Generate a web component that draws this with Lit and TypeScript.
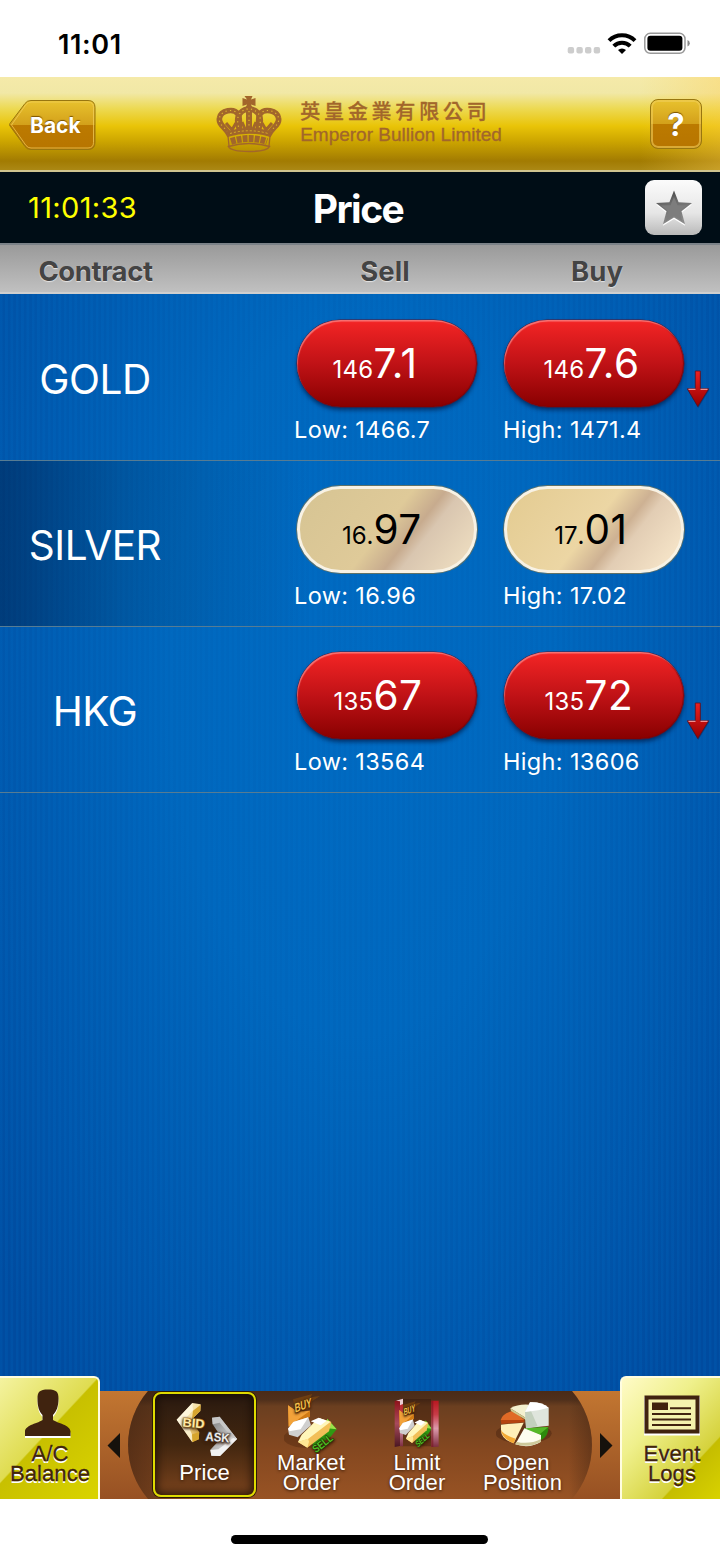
import { LitElement, html, css, svg } from "lit";
import { customElement, property } from "lit/decorators.js";
import { classMap } from "lit/directives/class-map.js";

interface Quote {
  name: string;
  sell: [string, string];
  buy: [string, string];
  low: string;
  high: string;
  down: boolean;
}

const quotes: Quote[] = [
  { name: "GOLD", sell: ["146", "7.1"], buy: ["146", "7.6"], low: "1466.7", high: "1471.4", down: true },
  { name: "SILVER", sell: ["16.", "97"], buy: ["17.", "01"], low: "16.96", high: "17.02", down: false },
  { name: "HKG", sell: ["135", "67"], buy: ["135", "72"], low: "13564", high: "13606", down: true },
];

const statusIcons = html`
  <svg width="124" height="24" viewBox="0 0 124 24">
    <g fill="#cdcdcd">
      <rect x="0.7" y="15" width="6.4" height="6.4" rx="2" />
      <rect x="9.4" y="15" width="6.4" height="6.4" rx="2" />
      <rect x="18" y="15" width="6.4" height="6.4" rx="2" />
      <rect x="26.7" y="15" width="6.4" height="6.4" rx="2" />
    </g>
    <g fill="none" stroke="#000" stroke-width="4">
      <path d="M42 8.600a18.400 18.400 0 0 1 26 0" />
      <path d="M46.800 14.200a11.400 11.400 0 0 1 16.400 0" />
    </g>
    <path d="M51 18a6 6 0 0 1 8 0l-4 4z" fill="#000" />
    <rect x="77.8" y="1.3" width="40.2" height="20" rx="5.5" fill="none" stroke="#999" stroke-width="1.5" />
    <rect x="80.4" y="3.8" width="35" height="15" rx="3" />
    <path d="M120.500 8q2.300 1 2.300 3.300t-2.300 3.300z" fill="#888" />
  </svg>
`;

const crown = html`
  <svg width="66" height="58" viewBox="0 0 66 58" fill="none" stroke="#a2662b">
    <path
      d="M28.500 1h8l-1.500 3.500 4.500-1.500v8l-4.500-1.500 1.500 3.500h-7l1.500-3.500-4.500 1.500v-8l4.500 1.500z"
      fill="#a2662b"
      stroke="none"
    />
    <g stroke-width="5.600">
      <path d="M14 41C10 32 2 30 3.500 23C5 15 18 13 22 19C25 24 22 28 24 36" />
      <path d="M52 41C56 32 64 30 62.500 23C61 15 48 13 44 19C41 24 44 28 42 36" />
      <path d="M24 36C20 26 20 16 33 13.500C46 16 46 26 42 36" />
      <path d="M33 14v22" stroke-width="6" />
    </g>
    <g stroke="#e0bb2c" stroke-width="1.200" stroke-dasharray="1.200 3.200">
      <path d="M14 41C10 32 2 30 3.500 23C5 15 18 13 22 19" />
      <path d="M52 41C56 32 64 30 62.500 23C61 15 48 13 44 19" />
      <path d="M24 36C20 26 20 16 33 13.500C46 16 46 26 42 36" />
      <path d="M33 16v20" />
    </g>
    <path d="M10 28l6 7 4-7M56 28l-6 7-4-7M26 27l3 7M40 27l-3 7" stroke-width="3" />
    <path d="M11 37Q33 30 55 37L54 41Q33 35 12 41z" fill="#a2662b" stroke-width="1.400" />
    <path d="M14 38.500Q33 33 52 38.500" stroke="#d8b024" stroke-width="1" stroke-dasharray="2 2" />
    <path d="M15 46.500Q33 40.500 51 46.500" stroke-width="6.800" stroke-dasharray="4.800 1.200" />
    <path d="M12.500 51.500Q33 45.500 53.500 51.500Q51 56.500 33 56.500Q15 56.500 12.500 51.500z" stroke-width="1.600" />
    <path d="M12 41l1 10M54 41l-1 10" stroke-width="1.300" />
  </svg>
`;

const downArrow = html`
  <svg class="arrow" width="24" height="40" viewBox="0 0 24 40">
    <defs>
      <linearGradient id="ar" x1="0" y1="0" x2="0" y2="1">
        <stop offset="0" stop-color="#ee2020" />
        <stop offset="1" stop-color="#950000" />
      </linearGradient>
    </defs>
    <path d="M8.800 2.500h5v17.500h8.500l-11 18L.5 20h8.300z" fill="#002a66" opacity=".5" />
    <path d="M8.300 1h5v17.800h8.400L10.800 36.500 .3 18.800h8z" fill="url(#ar)" stroke="#5c1020" stroke-width=".8" />
    <path d="M1.500 19.400h7M13.500 19.400h7" stroke="#ef8f8f" stroke-width="1.300" />
  </svg>
`;

const starIcon = html`
  <svg width="38" height="36" viewBox="0 0 38 36">
    <defs>
      <linearGradient id="sg" x1="0" y1="0" x2=".3" y2="1">
        <stop offset="0" stop-color="#3a3a3a" />
        <stop offset=".45" stop-color="#6c6c6c" />
        <stop offset="1" stop-color="#8a8a8a" />
      </linearGradient>
    </defs>
    <path d="M19 2l4.600 11.800 13.400.8-10.500 8.100 3.500 13L19 29 8 35.700l3.500-13L1 14.600l13.400-.8z" fill="#fff" />
    <path d="M19 .5l4.600 11.800 13.400.8-10.500 8.100 3.500 13L19 27.500 8 34.200l3.500-13L1 13.100l13.400-.8z" fill="url(#sg)" />
    <path d="M19 7l3.500 8.200 9.500.3-7.500 6 2.700 9.500-8.200-5.300-8.200 5.300 2.700-9.500-7.500-6 9.500-.3z" fill="#7d7d7d" />
  </svg>
`;

const personIcon = html`
  <svg width="48" height="50" viewBox="0 0 48 50">
    <path
      d="M24 2.500c8.500 0 10.500 4 10.500 9 0 8-2 13-5.500 16.500v5c4 3 17.500 5 17.500 11.500V49H1V44.500C1 38 15 36 18.500 33v-5C15 24.500 13.500 19.500 13.500 11.500c0-5 2-9 10.500-9z"
      fill="#fff"
    />
    <path
      d="M24 .5c8.500 0 10.500 2.500 10.500 9 0 8-2 13-5.500 16.500v5c4 3 17.500 5 17.500 11.500V47H1V42.500C1 36 15 34 18.500 31v-5C15 22.500 13.500 17.500 13.500 9.500c0-6.500 2-9 10.500-9z"
      fill="#40230f"
    />
  </svg>
`;

const logIcon = html`
  <svg width="56" height="42" viewBox="0 0 56 42">
    <rect x="2" y="3.500" width="52" height="35" fill="none" stroke="#fff" stroke-width="4" />
    <rect x="2.500" y="2.500" width="51" height="34" fill="#f4f2ad" stroke="#40230f" stroke-width="4" />
    <rect x="8" y="7.500" width="16" height="7.500" fill="#40230f" />
    <path d="M26 13.300h21M8 19h39M8 24.500h39M8 30h39" stroke="#40230f" stroke-width="2" />
  </svg>
`;

const priceIcon = html`
  <svg class="art" width="66" height="58" viewBox="520 105 198 174">
    <defs>
      <linearGradient id="g1" x1="0" y1="0" x2="1" y2="1">
        <stop offset="0" stop-color="#fffdf0" />
        <stop offset=".5" stop-color="#f5dfa0" />
        <stop offset="1" stop-color="#c98d18" />
      </linearGradient>
      <linearGradient id="g2" x1="0" y1="0" x2="1" y2="1">
        <stop offset="0" stop-color="#777" />
        <stop offset=".5" stop-color="#bbb" />
        <stop offset="1" stop-color="#fff" />
      </linearGradient>
    </defs>
    <path d="M531 164L578 114l25 4-1 20-27 26 24 38-2 21-19 9z" fill="url(#g1)" />
    <path d="M580 137l23-18-1 19-25 24zM578 231l-3-22 22-7 1 21z" fill="#d7a52e" />
    <path d="M531 164l47-50 2 22-24 26 21 46 1 24z" fill="#fffbe6" opacity=".75" />
    <path d="M712 222L660 155l-23 3 2 20 27 40-34 36 3 18 26 1z" fill="url(#g2)" />
    <path d="M661 273l51-51-6-7-50 38-24 2 3 17z" fill="#f2f2f2" />
    <path d="M660 155l52 67-14-4-38-45-21 5-2-20z" fill="#c7c7c7" />
    <text x="549" y="187" font-size="37" textLength="66" lengthAdjust="spacingAndGlyphs" fill="#ffe9a6" stroke="#b98a30" stroke-width="4" transform="rotate(5 580 172)">BID</text>
    <text x="618" y="229" font-size="37" textLength="72" lengthAdjust="spacingAndGlyphs" fill="#ededed" stroke="#666" stroke-width="4" transform="rotate(5 650 215)">ASK</text>
  </svg>
`;

// gold bars between the BUY and SELL arrows, used by both order tabs
const bars = svg`
  <path d="M122 122l28 19 38-3v18l-20 14-44 16z" fill="#d07a14" />
  <path d="M122 122l28 19 38-3-30 22-34 26z" fill="#f2a23a" />
  <path d="M137 104l58-16-5 10 28-4-24 16-4 20-44 16z" fill="#8a4e0c" opacity=".55" />
  <text x="0" y="0" font-size="37" textLength="54" lengthAdjust="spacingAndGlyphs" fill="#f5c04c" stroke="#5b3406" stroke-width="3" transform="translate(143 144) rotate(-20) skewX(-16)">BUY</text>
  <path d="M122 192l16-20 45-14 8 24-40 36-26-8z" fill="#cfcfcf" />
  <path d="M122 192l16-20 45-14-23 36-34 6z" fill="#fff" />
  <path d="M240 162l28 32-18 22-52 34-4-20 34-36z" fill="#2f9a12" />
  <path d="M240 162l28 32-34-4z" fill="#9be04a" />
  <path d="M152 232l62-72 38 12-7 28-65 49z" fill="#f2bf58" />
  <path d="M152 232l11-22 51-50 36 11-68 52z" fill="#fff6ba" />
  <path d="M190 170l24-11 24 9-18 14z" fill="#fff" />
  <path d="M152 232l30-10 3 9-5 18z" fill="#ffe794" />
  <text x="206" y="266" font-size="33" textLength="68" lengthAdjust="spacingAndGlyphs" fill="#4fbd22" stroke="#0f4a08" stroke-width="3" transform="rotate(-38 206 266)">SELL</text>
`;

const marketIcon = html`
  <svg class="art" width="58" height="62" viewBox="110 85 174 186">
    <ellipse cx="180" cy="220" rx="72" ry="30" fill="#3a1c08" opacity=".3" />
    ${bars}
  </svg>
`;

const limitIcon = html`
  <svg class="art" width="48" height="52" viewBox="429 98 144 156">
    <defs>
      <linearGradient id="rb" x1="0" y1="0" x2="0" y2="1">
        <stop offset="0" stop-color="#b81820" />
        <stop offset=".3" stop-color="#c83c48" />
        <stop offset=".6" stop-color="#dd9aac" />
        <stop offset="1" stop-color="#7c2c40" />
      </linearGradient>
      <linearGradient id="rd" x1="0" y1="0" x2="0" y2="1">
        <stop offset="0" stop-color="#8e1018" />
        <stop offset=".5" stop-color="#a84a5c" />
        <stop offset="1" stop-color="#4a1622" />
      </linearGradient>
    </defs>
    <path d="M457 104h86v142h-86z" fill="#2a1206" opacity=".35" />
    <path d="M434 110l16-3v138l-16 3z" fill="url(#rd)" />
    <path d="M450 107l9-3v142h-9z" fill="url(#rb)" />
    <path d="M438 109l21-6v16l-9 4v-12z" fill="#e9cdd3" />
    <g transform="translate(366 42) scale(.67 .78)">${bars}</g>
    <path d="M544 109h22v138l-22 1z" fill="url(#rb)" />
    <path d="M544 109h6v139h-6z" fill="#7a1420" opacity=".6" />
  </svg>
`;

const positionIcon = html`
  <svg width="58" height="50" viewBox="105 102 174 150">
    <ellipse cx="188" cy="205" rx="84" ry="30" fill="#2a1206" opacity=".3" />
    <path d="M119 165Q123 145 158 137L190 165z" fill="#e06a26" />
    <path d="M119 165L190 165 190 172 121 177z" fill="#b5430f" />
    <path d="M148 130Q170 117 203 119L196 160z" fill="#f4f1cf" />
    <path d="M148 130l48 30v6l-46-28z" fill="#cfc98d" />
    <path d="M120 179l68-6-30 62Q120 222 120 195z" fill="#ffefb8" />
    <path d="M120 195Q122 220 158 235l6-14Q128 210 120 195z" fill="#f4a935" />
    <path d="M188 190l74-4Q264 212 240 226z" fill="#2d8a0c" />
    <path d="M188 190l74-4-26 22z" fill="#55b828" />
    <path d="M190 190l50 20v20Q205 252 163 238z" fill="#fdfdf0" />
    <path d="M163 238q40 12 77-8v-8q-36 18-74 8z" fill="#cdc99a" />
    <path d="M207 112Q240 110 263 128V182L195 190 192 140z" fill="#dfe5dc" />
    <path d="M192 140l18-2 20 46-35 6z" fill="#c3d0bd" />
    <path d="M207 112Q240 110 263 128L232 136 192 141z" fill="#fff" />
  </svg>
`;

@customElement("price-pill")
class PricePill extends LitElement {
  @property() small = "";
  @property() large = "";
  @property({ type: Boolean }) down = false;
  @property({ type: Boolean }) buy = false;

  static styles = css`
    :host {
      display: block;
      width: 180px;
    }

    .pill {
      box-sizing: border-box;
      display: grid;
      grid-template-columns: 76.500px 1fr;
      align-items: baseline;
      height: 87px;
      border-radius: 44px;
      font-family: Inter, sans-serif;
      color: #000;
      background: linear-gradient(128deg, #d6c493 0%, #dfca99 48%, #c7ab8e 62%, #d9c6b0 69%, #ead9bd 90%);
      border: 3px solid #f8f2e4;
      box-shadow: 0 0 0 1px rgba(120, 116, 80, 0.8);
    }

    .pill.buy {
      grid-template-columns: 80.500px 1fr;
      background: linear-gradient(128deg, #e3cb91 0%, #ecd6a4 48%, #cdb193 62%, #e2cdb4 69%, #f3e1c5 90%);
    }

    .pill.down {
      color: #fff;
      background: linear-gradient(#f42525, #c01216 50%, #880000);
      border: 0;
      box-shadow:
        0 0 0 0.500px #5a1530,
        0 3px 4px rgba(0, 20, 60, 0.65),
        inset 1px 2px 1px -0.500px rgba(255, 160, 160, 0.65),
        inset -1px 0 1px rgba(90, 0, 10, 0.6);
    }

    .small {
      font-size: 24px;
      text-align: right;
      letter-spacing: 0.300px;
      font-kerning: none;
    }

    .large {
      font-size: 40.500px;
      line-height: 87px;
      letter-spacing: 0.500px;
    }

    .pill:not(.down) .large {
      margin-left: -3px;
      line-height: 81px;
    }

    .pill:not(.down) .small {
      margin-right: 3px;
      letter-spacing: 0;
    }
  `;

  render() {
    return html`
      <div class=${classMap({ pill: true, down: this.down, buy: this.buy })}>
        <span class="small">${this.small}</span><span class="large">${this.large}</span>
      </div>
    `;
  }
}

@customElement("app-root")
class AppRoot extends LitElement {
  static styles = css`
    :host {
      display: flex;
      flex-direction: column;
      width: 720px;
      height: 1558px;
      overflow: hidden;
      background: #fff;
      font-family: Inter, "Noto Sans CJK TC", sans-serif;
    }

    svg {
      display: block;
      flex: none;
    }

    .art {
      font-family: "Liberation Sans", sans-serif;
      font-weight: bold;
    }

    .art text {
      paint-order: stroke;
    }

    .status {
      box-sizing: border-box;
      height: 77px;
      padding: 11px 29px 0 58px;
      display: flex;
      align-items: center;
      justify-content: space-between;
      font-size: 27px;
      font-weight: 600;
      letter-spacing: 0.600px;
    }

    .brand {
      box-sizing: border-box;
      height: 95px;
      padding: 0 18px 0 9px;
      display: flex;
      justify-content: space-between;
      border-bottom: 2px solid #cfc48f;
      background:
        linear-gradient(to right, transparent 640px, rgba(255, 205, 80, 0.35)),
        linear-gradient(
          #f5eaa9 0,
          #f1e8a6 16px,
          #edda55 31px,
          #e9c408 49px,
          #cda600 64px,
          #a27b02 84px,
          #ab8814 93px
        );
    }

    .back {
      margin-top: 22px;
      height: 52px;
      display: grid;
    }

    .back > * {
      grid-area: 1 / 1;
    }

    .back span {
      padding-left: 21px;
      font-size: 21px;
      font-weight: 700;
      line-height: 54px;
      color: #fff;
      text-shadow: 0 -1px 1px #7a5200;
    }

    .logo {
      display: flex;
      margin: 18px 0 0 -28px;
      gap: 18px;
      color: #a2662b;
    }

    .zh {
      margin-top: 4px;
      font: 500 20px/24px "Noto Sans CJK TC", sans-serif;
      letter-spacing: 3.800px;
      white-space: nowrap;
      -webkit-text-stroke: 0.300px #a2662b;
    }

    .en {
      margin-top: 1px;
      font: 19px/22px "Liberation Sans", sans-serif;
      -webkit-text-stroke: 0.300px #a2662b;
    }

    .help {
      box-sizing: border-box;
      width: 52px;
      height: 50px;
      margin-top: 22px;
      border: 1px solid #98760f;
      border-radius: 8px;
      background: linear-gradient(#e8c22e, #d3a01a 50%, #bc7a00 50%, #b77500);
      box-shadow: inset 0 0 0 2px rgba(240, 205, 90, 0.6);
      color: #fff;
      font-size: 31px;
      font-weight: 700;
      line-height: 49px;
      text-align: center;
      text-shadow: 0 -1px 1px #7a5200;
    }

    .title {
      box-sizing: border-box;
      height: 71px;
      padding: 0 18px 0 28px;
      display: grid;
      grid-template-columns: 1fr auto 1fr;
      align-items: center;
      background: #000d16;
    }

    .clock {
      color: #ff0;
      font-size: 29px;
      font-kerning: none;
      letter-spacing: 0.350px;
    }

    .title h1 {
      margin: 3px 0 0 -14px;
      color: #fff;
      font-size: 39px;
      line-height: 60px;
      font-weight: 700;
      letter-spacing: -1.500px;
    }

    .star {
      justify-self: end;
      width: 57px;
      height: 55px;
      display: grid;
      place-items: center;
      border-radius: 9px;
      background: linear-gradient(#fbfbfb, #e6e6e6 60%, #b9b9b9);
    }

    .heads {
      box-sizing: border-box;
      height: 51px;
      display: grid;
      grid-template-columns: 191px 104px 180px 27px 190px;
      border-top: 2px solid #7b8288;
      border-bottom: 2px solid #cfcfcf;
      background: linear-gradient(#9a9a9a, #c0c0c0);
      color: #444;
      font-size: 27.500px;
      font-weight: 700;
      line-height: 52px;
      letter-spacing: -0.400px;
      text-align: center;
      text-shadow: 0 1px 1px #e5e5e5;
    }

    .heads .sell {
      grid-column: 3;
      letter-spacing: 0;
    }

    .heads .buy {
      grid-column: 5;
      letter-spacing: 0;
    }

    .board {
      flex: 1;
      padding-top: 1px;
      background:
        repeating-linear-gradient(to right, rgba(0, 120, 210, 0.14) 0 2px, transparent 3px 5px, rgba(0, 120, 210, 0.14) 5.330px),
        radial-gradient(ellipse 480px 900px at 50% 380px, #0069c0 0, #0066bc 40%, #0055aa 80%, #004b9f 100%);
    }

    .row {
      box-sizing: border-box;
      height: 166px;
      padding-top: 25px;
      display: grid;
      grid-template-columns: 294px 209px 184px 33px;
      align-items: start;
      color: #fff;
      border-bottom: 1px solid #577c93;
    }

    .row.even {
      background: linear-gradient(to right, rgba(0, 30, 70, 0.5), rgba(0, 40, 70, 0.22) 120px, transparent 310px);
    }

    .name {
      width: 190px;
      font-size: 40.500px;
      line-height: 119px;
      text-align: center;
      letter-spacing: -0.500px;
    }

    .sell price-pill {
      margin-left: 3px;
    }

    .buy price-pill {
      margin-left: 1px;
    }

    .range {
      margin-top: 8px;
      font-size: 23.500px;
      line-height: 30px;
      letter-spacing: 0.350px;
    }

    .arrow {
      margin-top: 50px;
    }

    .tabs {
      display: flex;
      align-items: flex-end;
      margin-top: -15px;
      font: 22px/20px "Liberation Sans", sans-serif;
      letter-spacing: 0.100px;
      text-align: center;
    }

    .side {
      box-sizing: border-box;
      width: 100px;
      height: 123px;
      display: flex;
      flex-direction: column;
      align-items: center;
      color: #40230f;
      -webkit-text-stroke: 0.300px #40230f;
      text-shadow: 0 1.500px 0 #fff;
    }

    .side.left {
      padding: 11px 0 0 2px;
      border-top: 2px solid #fffde0;
      border-right: 2px solid #fffde0;
      border-radius: 0 6px 0 0;
      background: linear-gradient(133deg, #f4f3a0 0, #dfdc50 46%, #c8c000 47%, #dad400 100%);
    }

    .side.left svg {
      margin-right: 4px;
    }

    .side.left span {
      margin-top: 5px;
    }

    .side.right {
      padding: 17px 0 0 2px;
      border-top: 2px solid #fffde0;
      border-left: 2px solid #fffde0;
      border-radius: 6px 0 0 0;
      background: linear-gradient(133deg, #fffbc8 0, #eff08c 35%, #d5d23c 72%, #c5bd00 73%, #d8d200 100%);
    }

    .side.right span {
      margin-top: 7px;
    }

    .strip {
      flex: 1;
      height: 108px;
      display: grid;
      overflow: hidden;
    }

    .strip > * {
      grid-area: 1 / 1;
    }

    .items {
      display: grid;
      grid-template-columns: 53px 103px 2px 106px 106px 105px;
      color: #fff;
      text-shadow: 0 1px 3px #3a1c08;
    }

    .item {
      display: flex;
      flex-direction: column;
      align-items: center;
    }

    .item.active {
      box-sizing: border-box;
      grid-column: 2;
      height: 105px;
      margin-top: 1px;
      border: 2px solid #dedb00;
      border-radius: 8px;
      background: linear-gradient(#2a1a10, #42260f 50%, #7a431d);
      box-shadow:
        0 0 0 1px #2b1a06,
        inset 0 0 8px 2px rgba(15, 8, 2, 0.75);
    }

    .item.active svg {
      margin: 6px 0 0 2px;
    }

    .item.active span {
      margin-top: 5px;
    }

    .item.market {
      grid-column: 4;
      padding-top: 2px;
    }

    .item.market svg {
      margin-left: 4px;
    }

    .item.market span {
      margin-top: -2px;
    }

    .item.limit {
      padding-top: 6px;
    }

    .item.limit span {
      margin-top: 4px;
    }

    .item.position {
      padding-top: 8px;
    }

    .item.position svg {
      margin-left: 4px;
    }

    .item.position span {
      margin-top: 4px;
    }

    .home {
      width: 257px;
      height: 9px;
      margin: 36px 0 14px 231px;
      border-radius: 5px;
      background: #000;
    }
  `;

  row(q: Quote, i: number) {
    return html`
      <div class=${classMap({ row: true, even: i % 2 === 1 })}>
        <div class="name">${q.name}</div>
        <div class="sell">
          <price-pill .small=${q.sell[0]} .large=${q.sell[1]} ?down=${q.down}></price-pill>
          <div class="range">Low: ${q.low}</div>
        </div>
        <div class="buy">
          <price-pill buy .small=${q.buy[0]} .large=${q.buy[1]} ?down=${q.down}></price-pill>
          <div class="range">High: ${q.high}</div>
        </div>
        ${q.down ? downArrow : ""}
      </div>
    `;
  }

  render() {
    return html`
      <div class="status"><span>11:01</span>${statusIcons}</div>
      <div class="brand">
        <div class="back">
          <svg width="87" height="52" viewBox="0 0 87 52">
            <defs>
              <linearGradient id="bk" x1="0" y1="0" x2="0" y2="1">
                <stop offset="0" stop-color="#e8c22e" />
                <stop offset=".5" stop-color="#d3a01a" />
                <stop offset=".5" stop-color="#bc7a00" />
                <stop offset="1" stop-color="#b77500" />
              </linearGradient>
            </defs>
            <path d="M22 1.500h57q7 0 7 7v35q0 7-7 7H22q-4 0-6-3L1 27q-1-1.300 0-2.600L16 4.500q2-3 6-3z" fill="url(#bk)" stroke="#98760f" />
            <path d="M22 3h57q5.500 0 5.500 5.500v35q0 5.500-5.500 5.500H22q-3 0-5-2.500L2.500 26 17 5.500Q19 3 22 3z" fill="none" stroke="#f2d060" opacity=".7" />
          </svg>
          <span>Back</span>
        </div>
        <div class="logo">
          ${crown}
          <div>
            <div class="zh">英皇金業有限公司</div>
            <div class="en">Emperor Bullion Limited</div>
          </div>
        </div>
        <div class="help">?</div>
      </div>
      <div class="title">
        <span class="clock">11:01:33</span>
        <h1>Price</h1>
        <div class="star">${starIcon}</div>
      </div>
      <div class="heads">
        <span>Contract</span><span class="sell">Sell</span><span class="buy">Buy</span>
      </div>
      <div class="board">${quotes.map((q, i) => this.row(q, i))}</div>
      <div class="tabs">
        <div class="side left">${personIcon}<span>A/C<br />Balance</span></div>
        <div class="strip">
          <svg width="520" height="108" viewBox="100 0 520 108">
            <defs>
              <linearGradient id="st" x1="0" y1="0" x2="0" y2="1">
                <stop offset="0" stop-color="#c27631" />
                <stop offset="1" stop-color="#975123" />
              </linearGradient>
              <linearGradient id="cp" x1="0" y1="0" x2="0" y2="1">
                <stop offset="0" stop-color="#4a2b18" />
                <stop offset=".08" stop-color="#4f2f1b" />
                <stop offset=".14" stop-color="#6b3f20" />
                <stop offset=".55" stop-color="#854820" />
                <stop offset="1" stop-color="#985324" />
              </linearGradient>
              <linearGradient id="ed" x1="0" y1="0" x2="1" y2="0">
                <stop offset="0" stop-color="#3a2010" stop-opacity=".6" />
                <stop offset=".06" stop-color="#3a2010" stop-opacity=".4" />
                <stop offset=".15" stop-color="#3a2010" stop-opacity="0" />
                <stop offset=".95" stop-color="#3a2010" stop-opacity="0" />
                <stop offset="1" stop-color="#3a2010" stop-opacity=".4" />
              </linearGradient>
            </defs>
            <path d="M100 0h520v108H100z" fill="url(#st)" />
            <path d="M148 0H572A83 83 0 0 1 572 108H148A83 83 0 0 1 148 0z" fill="url(#cp)" />
            <path d="M148 0H572A83 83 0 0 1 572 108H148A83 83 0 0 1 148 0z" fill="url(#ed)" />
            <path d="M120 42v25l-12.500-12.500zM600 42v25l12.500-12.500z" fill="#15110c" />
          </svg>
          <div class="items">
            <div class="item active">${priceIcon}<span>Price</span></div>
            <div class="item market">${marketIcon}<span>Market<br />Order</span></div>
            <div class="item limit">${limitIcon}<span>Limit<br />Order</span></div>
            <div class="item position">${positionIcon}<span>Open<br />Position</span></div>
          </div>
        </div>
        <div class="side right">${logIcon}<span>Event<br />Logs</span></div>
      </div>
      <div class="home"></div>
    `;
  }
}
